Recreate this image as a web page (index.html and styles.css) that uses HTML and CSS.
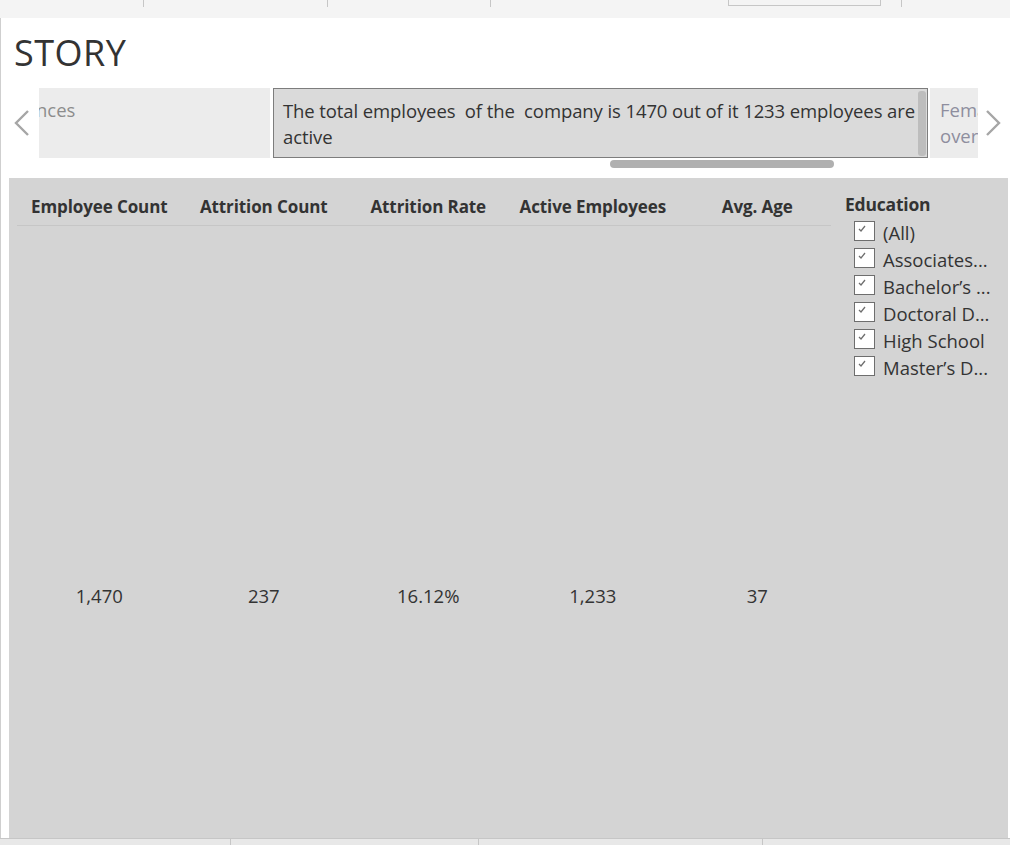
FILE: index.html
```html
<!DOCTYPE html>
<html>
<head>
<meta charset="utf-8">
<link rel="stylesheet" href="styles.css">
</head>
<body>
<div class="topbar">
  <div class="tick" style="width:144px"></div>
  <div class="tick" style="width:184px"></div>
  <div class="tick" style="width:163px"></div>
  <div class="gap" style="width:237px"></div>
  <div class="tabbox"></div>
  <div class="tick" style="width:21px"></div>
</div>
<div class="main">
  <h1 class="title">STORY</h1>
  <div class="storyrow">
    <div class="arrow left">
      <svg width="16" height="26" viewBox="0 0 16 26"><path d="M14 1 L2 13 L14 25" fill="none" stroke="#a6a6a6" stroke-width="2.4"/></svg>
    </div>
    <div class="point prev"><span class="clip">nces</span></div>
    <div class="point current">
      <p class="ptext">The total employees &nbsp;of the &nbsp;company is 1470 out of it 1233 employees are active</p>
      <div class="vscroll"></div>
    </div>
    <div class="point next"><span class="ntext">Fema<br>over</span></div>
    <div class="arrow right">
      <svg width="16" height="26" viewBox="0 0 16 26"><path d="M2 1 L14 13 L2 25" fill="none" stroke="#a6a6a6" stroke-width="2.4"/></svg>
    </div>
  </div>
  <div class="hscrollrow"><div class="hscroll"></div></div>
  <div class="panel">
    <div class="kpis">
      <div class="heads">
        <div class="col">Employee Count</div>
        <div class="col">Attrition Count</div>
        <div class="col">Attrition Rate</div>
        <div class="col">Active Employees</div>
        <div class="col">Avg. Age</div>
      </div>
      <div class="vals">
        <div class="col">1,470</div>
        <div class="col">237</div>
        <div class="col">16.12%</div>
        <div class="col">1,233</div>
        <div class="col">37</div>
      </div>
    </div>
    <div class="filter">
      <div class="ftitle">Education</div>
      <div class="opt"><span class="cb"><svg width="8" height="7" viewBox="0 0 8 7"><path d="M1 4 L3 6 L7 1" fill="none" stroke="#6e6e6e" stroke-width="1.3"/></svg></span>(All)</div>
      <div class="opt"><span class="cb"><svg width="8" height="7" viewBox="0 0 8 7"><path d="M1 4 L3 6 L7 1" fill="none" stroke="#6e6e6e" stroke-width="1.3"/></svg></span>Associates...</div>
      <div class="opt"><span class="cb"><svg width="8" height="7" viewBox="0 0 8 7"><path d="M1 4 L3 6 L7 1" fill="none" stroke="#6e6e6e" stroke-width="1.3"/></svg></span>Bachelor’s ...</div>
      <div class="opt"><span class="cb"><svg width="8" height="7" viewBox="0 0 8 7"><path d="M1 4 L3 6 L7 1" fill="none" stroke="#6e6e6e" stroke-width="1.3"/></svg></span>Doctoral D...</div>
      <div class="opt"><span class="cb"><svg width="8" height="7" viewBox="0 0 8 7"><path d="M1 4 L3 6 L7 1" fill="none" stroke="#6e6e6e" stroke-width="1.3"/></svg></span>High School</div>
      <div class="opt"><span class="cb"><svg width="8" height="7" viewBox="0 0 8 7"><path d="M1 4 L3 6 L7 1" fill="none" stroke="#6e6e6e" stroke-width="1.3"/></svg></span>Master’s D...</div>
    </div>
  </div>
</div>
<div class="bottombar">
  <div class="bseg" style="width:231px"></div>
  <div class="bseg" style="width:248px"></div>
  <div class="bseg" style="width:284px"></div>
</div>
</body>
</html>
```
FILE: styles.css
```css
* { box-sizing: border-box; }
html, body { margin: 0; padding: 0; }
body {
  width: 1010px;
  height: 845px;
  overflow: hidden;
  background: #ffffff;
  font-family: "Open Sans", "Noto Sans", sans-serif;
  color: #333333;
  display: flex;
  flex-direction: column;
}
.topbar {
  height: 18px;
  background: #f4f4f4;
  display: flex;
  align-items: flex-start;
  flex-shrink: 0;
}
.tick {
  height: 7px;
  border-right: 1px solid #c6c6c6;
}
.gap { height: 7px; }
.tabbox {
  width: 153px;
  height: 6px;
  border: 1px solid #c6c6c6;
  border-top: none;
}
.main {
  flex: 1;
  border-left: 1px solid #cfcfcf;
  display: flex;
  flex-direction: column;
  min-height: 0;
}
.title {
  margin: 0;
  padding: 12px 0 0 13px;
  height: 70px;
  font-size: 36px;
  font-weight: 400;
  line-height: 46px;
  color: #333333;
  letter-spacing: 0.5px;
}
.storyrow {
  display: flex;
  height: 70px;
  align-items: stretch;
}
.arrow {
  display: flex;
  align-items: center;
}
.arrow.left { width: 38px; justify-content: flex-end; padding-right: 9px; }
.arrow.right { width: 31px; justify-content: center; padding-right: 2px; }
.point {
  background: #ececec;
  overflow: hidden;
}
.prev {
  width: 231px;
  padding: 9px 0 0 0;
}
.clip {
  display: block;
  font-size: 18.5px;
  color: #8c8c8c;
  margin-left: -3px;
  line-height: 26px;
}
.current {
  width: 655px;
  margin-left: 3px;
  background: #dadada;
  border: 1px solid #7d7d7d;
  position: relative;
  display: flex;
  padding: 9px 0 0 9px;
}
.ptext {
  margin: 0;
  width: 636px;
  font-size: 18.5px;
  line-height: 26px;
  color: #333333;
  letter-spacing: -0.1px;
}
.vscroll {
  position: absolute;
  right: 1px;
  top: 2px;
  width: 8px;
  height: 65px;
  background: #bdbdbd;
  border-radius: 3px;
}
.next {
  width: 48px;
  margin-left: 2px;
  padding: 9px 0 0 10px;
  white-space: nowrap;
}
.ntext {
  font-size: 18.5px;
  line-height: 26px;
  color: #8e8e9e;
}
.hscrollrow {
  height: 20px;
  padding: 2px 0 0 609px;
}
.hscroll {
  width: 224px;
  height: 8px;
  background: #b0b0b0;
  border-radius: 4px;
}
.panel {
  flex: 1;
  margin-left: 8px;
  margin-right: 2px;
  background: #d4d4d4;
  display: flex;
  min-height: 0;
}
.kpis {
  width: 830px;
  flex-shrink: 0;
  padding-left: 8px;
  padding-top: 14px;
  display: flex;
  flex-direction: column;
}
.heads {
  display: flex;
  height: 34px;
  width: 814px;
  border-bottom: 1px solid #c6c6c6;
}
.vals {
  display: flex;
  padding-top: 358px;
}
.col {
  flex: 0 0 164.5px;
  text-align: center;
  white-space: nowrap;
}
.heads .col {
  font-size: 17px;
  font-weight: 700;
  line-height: 30px;
  letter-spacing: -0.1px;
  color: #333333;
}
.vals .col {
  font-size: 18.5px;
  line-height: 24px;
  color: #333333;
}
.filter {
  padding: 14px 0 0 6px;
}
.ftitle {
  font-size: 17.5px;
  font-weight: 700;
  line-height: 24px;
  letter-spacing: -0.2px;
  margin-bottom: 3px;
}
.opt {
  display: flex;
  align-items: center;
  height: 27px;
  padding-left: 9px;
  font-size: 18.5px;
  font-weight: 500;
  color: #333333;
  white-space: nowrap;
}
.cb {
  width: 21px;
  height: 20px;
  border: 1px solid #6e6e6e;
  background: #ffffff;
  margin-right: 8px;
  display: flex;
  align-items: flex-start;
  justify-content: flex-start;
  padding: 3px 0 0 3px;
  margin-top: -3px;
}
.cb svg { display: block; }
.bottombar {
  height: 7px;
  flex-shrink: 0;
  background: #e8e8e8;
  border-top: 1px solid #c6c6c6;
  display: flex;
}
.bseg {
  height: 100%;
  border-right: 1px solid #c6c6c6;
}
```
